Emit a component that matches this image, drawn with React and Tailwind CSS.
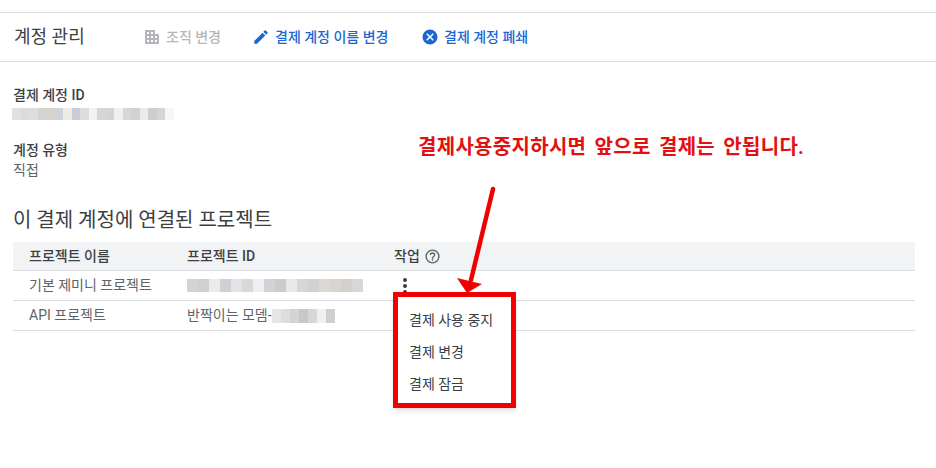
import React from 'react'

const font = "[font-family:Roboto,'Noto_Sans_CJK_KR',sans-serif]"

// pixelated redaction blocks seen in the screenshot
const idMosaic = ['#e2e0e0', '#dcdada', '#dedcdc', '#d6d3d2', '#d8d2d0', '#cfd3d9', '#ecebe6', '#c9ced6', '#dcdde0', '#f3f3f1', '#d4d6da', '#d2d4d8', '#f0f0f0', '#d8d6d6', '#d2d0d2', '#ecebeb', '#cfcdce', '#d6d4d6', '#f4f6f8']
const rowMosaic1 = ['#d4d4d4', '#cfcfd4', '#ebebeb', '#cdd0d6', '#e4e4e4', '#d8d8da', '#efefef', '#d0d3da', '#cfcbc9', '#e6e8ec', '#d8d5d2', '#d0d2d6', '#dcd8d6', '#d8d4d2', '#d4d0ce', '#dad6d4']
const rowMosaic2 = ['#e6e6e8', '#dddde0', '#d4d4d6', '#c8c8ca', '#d8d6d6', '#f0f0ee', '#cfcfd2']

const Mosaic = ({ colors, cell, height }) => (
  <div className="flex blur-[0.6px]" style={{ height }}>
    {colors.map((c, i) => (
      <div key={i} style={{ width: cell, backgroundColor: c }} />
    ))}
  </div>
)

const Building = () => (
  <svg viewBox="0 0 14 14" className="w-[14px] h-[14px] fill-[#b4b6b9]">
    <path d="M0 0h10v4h4v10H0zM2 2v2h2V2zm4 0v2h2V2zM2 6v2h2V6zm4 0v2h2V6zm4 0v2h2V6zM2 10v2h2v-2zm4 0v2h2v-2zm4 0v2h2v-2z" fillRule="evenodd" />
  </svg>
)

const Pencil = () => (
  <svg viewBox="0 0 24 24" className="w-[18px] h-[18px] fill-[#1a67d2]">
    <path d="M3 17.25V21h3.75L17.81 9.94l-3.75-3.75L3 17.25zM20.71 7.04a1 1 0 0 0 0-1.41l-2.34-2.34a1 1 0 0 0-1.41 0l-1.83 1.83 3.75 3.75 1.83-1.83z" />
  </svg>
)

const CancelCircle = () => (
  <svg viewBox="0 0 24 24" className="w-[18px] h-[18px] fill-[#1a67d2]">
    <path d="M12 2a10 10 0 1 0 0 20 10 10 0 0 0 0-20zm5 13.59L15.59 17 12 13.41 8.41 17 7 15.59 10.59 12 7 8.41 8.41 7 12 10.59 15.59 7 17 8.41 13.41 12 17 15.59z" />
  </svg>
)

const Help = () => (
  <svg viewBox="0 0 24 24" className="w-[17px] h-[17px] fill-[#5f6368]">
    <path d="M11 18h2v-2h-2v2zm1-16a10 10 0 1 0 0 20 10 10 0 0 0 0-20zm0 18a8 8 0 1 1 0-16 8 8 0 0 1 0 16zm0-14a4 4 0 0 0-4 4h2a2 2 0 1 1 4 0c0 2-3 1.75-3 5h2c0-2.25 3-2.5 3-5a4 4 0 0 0-4-4z" />
  </svg>
)

const App = () => (
  <div className={`relative w-[936px] h-[468px] overflow-hidden bg-white pt-3 ${font}`}>
    <div className="flex items-center h-[50px] border-y border-[#dadce0] pl-[14px]">
      <h1 className="w-[131px] text-[18px] -translate-y-px text-[#3c4043]">계정 관리</h1>
      <div className="flex items-center gap-[7px] w-[107px] text-[14px] font-medium text-[#b4b6b9]">
        <Building />
        <span>조직 변경</span>
      </div>
      <div className="flex items-center gap-[5px] w-[169px] text-[14px] font-medium text-[#1a67d2]">
        <Pencil />
        <span>결제 계정 이름 변경</span>
      </div>
      <div className="flex items-center gap-[5px] text-[14px] font-medium text-[#1a67d2]">
        <CancelCircle />
        <span>결제 계정 폐쇄</span>
      </div>
    </div>

    <div className="pl-[13px] pt-[24px]">
      <div className="text-[14px] leading-[19px] font-medium text-[#3c4043]">결제 계정 ID</div>
      <div className="mt-[3px] -ml-px">
        <Mosaic colors={idMosaic} cell={8.5} height={12} />
      </div>

      <div className="mt-[20px] text-[14px] leading-[20px] font-medium text-[#3c4043]">계정 유형</div>
      <div className="text-[14px] leading-[20px] text-[#5f6368]">직접</div>

      <h2 className="mt-[26px] text-[20px] leading-[28px] text-[#3c4043]">이 결제 계정에 연결된 프로젝트</h2>
    </div>

    <div className="ml-[13px] w-[902px] mt-[8px] text-[14px]">
      <div className="flex items-center h-[29px] bg-[#f1f3f4] border-b border-[#dadce0] font-medium text-[#3c4043]">
        <div className="w-[174px] pl-4">프로젝트 이름</div>
        <div className="w-[207px]">프로젝트 ID</div>
        <div className="flex items-center gap-[4px]">
          <span>작업</span>
          <Help />
        </div>
      </div>
      <div className="flex items-center h-[30px] border-b border-[#dadce0] text-[#5f6368]">
        <div className="w-[174px] pl-4">기본 제미니 프로젝트</div>
        <div className="w-[207px]">
          <Mosaic colors={rowMosaic1} cell={11} height={13} />
        </div>
        <div className="flex flex-col gap-[2px] self-start mt-[7px] pl-[9px]">
          <span className="w-[4px] h-[4px] rounded-full bg-[#3c4043]" />
          <span className="w-[4px] h-[4px] rounded-full bg-[#3c4043]" />
          <span className="w-[4px] h-[4px] rounded-full bg-[#3c4043]" />
        </div>
      </div>
      <div className="flex items-center h-[30px] border-b border-[#dadce0] text-[#5f6368]">
        <div className="w-[174px] pl-4">API 프로젝트</div>
        <div className="flex items-center w-[207px]">
          <span>반짝이는 모뎀-</span>
          <Mosaic colors={rowMosaic2} cell={9} height={14} />
        </div>
      </div>
    </div>

    {/* popup menu with the red highlight box drawn over it */}
    <div className="absolute left-[393px] top-[292px] w-[123px] h-[116px] bg-white border-[5px] border-[#f00000] shadow-md flex flex-col gap-[12px] pt-[13px] pl-[11px] text-[14px] leading-[20px] text-[#3c4043]">
      <div>결제 사용 중지</div>
      <div>결제 변경</div>
      <div>결제 잠금</div>
    </div>

    <div className="absolute left-[418px] top-[133px] text-[20px] leading-[28px] font-bold tracking-[0.3px] [word-spacing:3px] text-[#e21010] whitespace-nowrap">
      결제사용중지하시면 앞으로 결제는 안됩니다.
    </div>

    <svg className="absolute left-[450px] top-[180px]" width="50" height="116" viewBox="0 0 50 116">
      <path d="M43 9 L21 100" stroke="#f00000" strokeWidth="4.5" strokeLinecap="round" fill="none" />
      <path d="M7 98 L32 104 L17 113 Z" fill="#f00000" />
    </svg>
  </div>
)

export default App
